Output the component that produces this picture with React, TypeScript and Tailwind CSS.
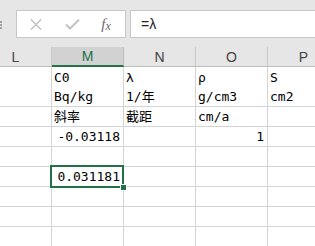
import React from "react";

type Cell = { t?: string; right?: boolean };

const cols = ["L", "M", "N", "O", "P"];

const rows: Cell[][] = [
  [{}, { t: "C0" }, { t: "λ" }, { t: "ρ" }, { t: "S" }],
  [{}, { t: "Bq/kg" }, { t: "1/年" }, { t: "g/cm3" }, { t: "cm2" }],
  [{}, { t: "斜率" }, { t: "截距" }, { t: "cm/a" }, {}],
  [{}, { t: "-0.03118", right: true }, {}, { t: "1", right: true }, {}],
  [{}, {}, {}, {}, {}],
  [{}, { t: "0.031181", right: true }, {}, {}, {}],
  [{}, {}, {}, {}, {}],
  [{}, {}, {}, {}, {}],
  [{}, {}, {}, {}, {}],
];

export default function App() {
  return (
    <div className="w-[315px] h-[246px] overflow-hidden bg-white font-['Liberation_Sans',sans-serif]">
      {/* formula bar */}
      <div className="h-[47px] bg-[#e6e6e6] flex items-start pt-[10px]">
        <div className="w-[16px] h-[28px] flex flex-col justify-center gap-[1px] pt-[1px]">
          <div className="w-[2px] h-[2px] bg-[#a0a0a0]" />
          <div className="w-[2px] h-[2px] bg-[#a0a0a0]" />
          <div className="w-[2px] h-[2px] bg-[#a0a0a0]" />
        </div>
        <div className="w-[110px] h-[28px] bg-white border border-[#c6c6c6] flex items-center">
          <div className="w-[38px] flex justify-center pl-[0px]">
            <svg width="12" height="11" viewBox="0 0 12 11">
              <path d="M1 0.5 L11 10.5 M11 0.5 L1 10.5" stroke="#c4c4c4" strokeWidth="1.6" fill="none" />
            </svg>
          </div>
          <div className="w-[34px] flex justify-center">
            <svg width="15" height="11" viewBox="0 0 15 11">
              <path d="M1 5.5 L5 9.5 L14 0.8" stroke="#c4c4c4" strokeWidth="2" fill="none" />
            </svg>
          </div>
          <div className="flex-1 flex justify-center pr-[2px] text-[15px] leading-none italic text-[#6b6b6b] font-['Liberation_Serif',serif]">
            <span>f</span>
            <span className="text-[12px] mt-[3px]">x</span>
          </div>
        </div>
        <div className="ml-[4px] h-[28px] flex-1 -mr-[4px] bg-white border border-[#c6c6c6] flex items-center pl-[10px] text-[14px] text-[#222]">
          =λ
        </div>
      </div>

      {/* column header */}
      <div className="flex -ml-[20px] h-[20px] bg-[#e6e6e6] border-b border-[#bdbdbd]">
        {cols.map((c) => {
          const sel = c === "M";
          return (
            <div
              key={c}
              className={
                sel
                  ? "w-[72px] shrink-0 h-[20px] -mb-[1px] bg-[#d2d2d2] border-b-2 border-b-[#217346] border-r border-r-[#bdbdbd] flex items-center justify-center text-[14px] text-[#217346] pt-[1px]"
                  : "w-[72px] shrink-0 h-[19px] border-r border-[#c8c8c8] flex items-center justify-center text-[14px] text-[#444] pt-[2px]"
              }
            >
              {c}
            </div>
          );
        })}
      </div>

      {/* grid */}
      <div className="-ml-[20px] font-['DejaVu_Sans_Mono','Noto_Sans_CJK_JP',monospace] text-[13px] text-black">
        {rows.map((r, ri) => (
          <div
            key={ri}
            className={
              ri === 0
                ? "flex h-[20px]"
                : "flex h-[20px] border-b border-[#d4d4d4]"
            }
          >
            {r.map((cell, ci) => {
              const selected = ri === 5 && ci === 1;
              return (
                <div
                  key={ci}
                  className={
                    (cell.right ? "justify-end pr-[3px] " : "justify-start pl-[2px] ") +
                    (selected ? "relative " : "") +
                    "w-[72px] shrink-0 border-r border-[#d4d4d4] flex items-center whitespace-nowrap leading-none"
                  }
                >
                  {cell.t}
                  {selected && (
                    <>
                      <div className="absolute -left-[2px] -top-[2px] w-[74px] h-[23px] border-2 border-[#217346]" />
                      <div className="absolute left-[68px] top-[17px] w-[7px] h-[7px] bg-[#217346] border border-white" />
                    </>
                  )}
                </div>
              );
            })}
          </div>
        ))}
      </div>
    </div>
  );
}
